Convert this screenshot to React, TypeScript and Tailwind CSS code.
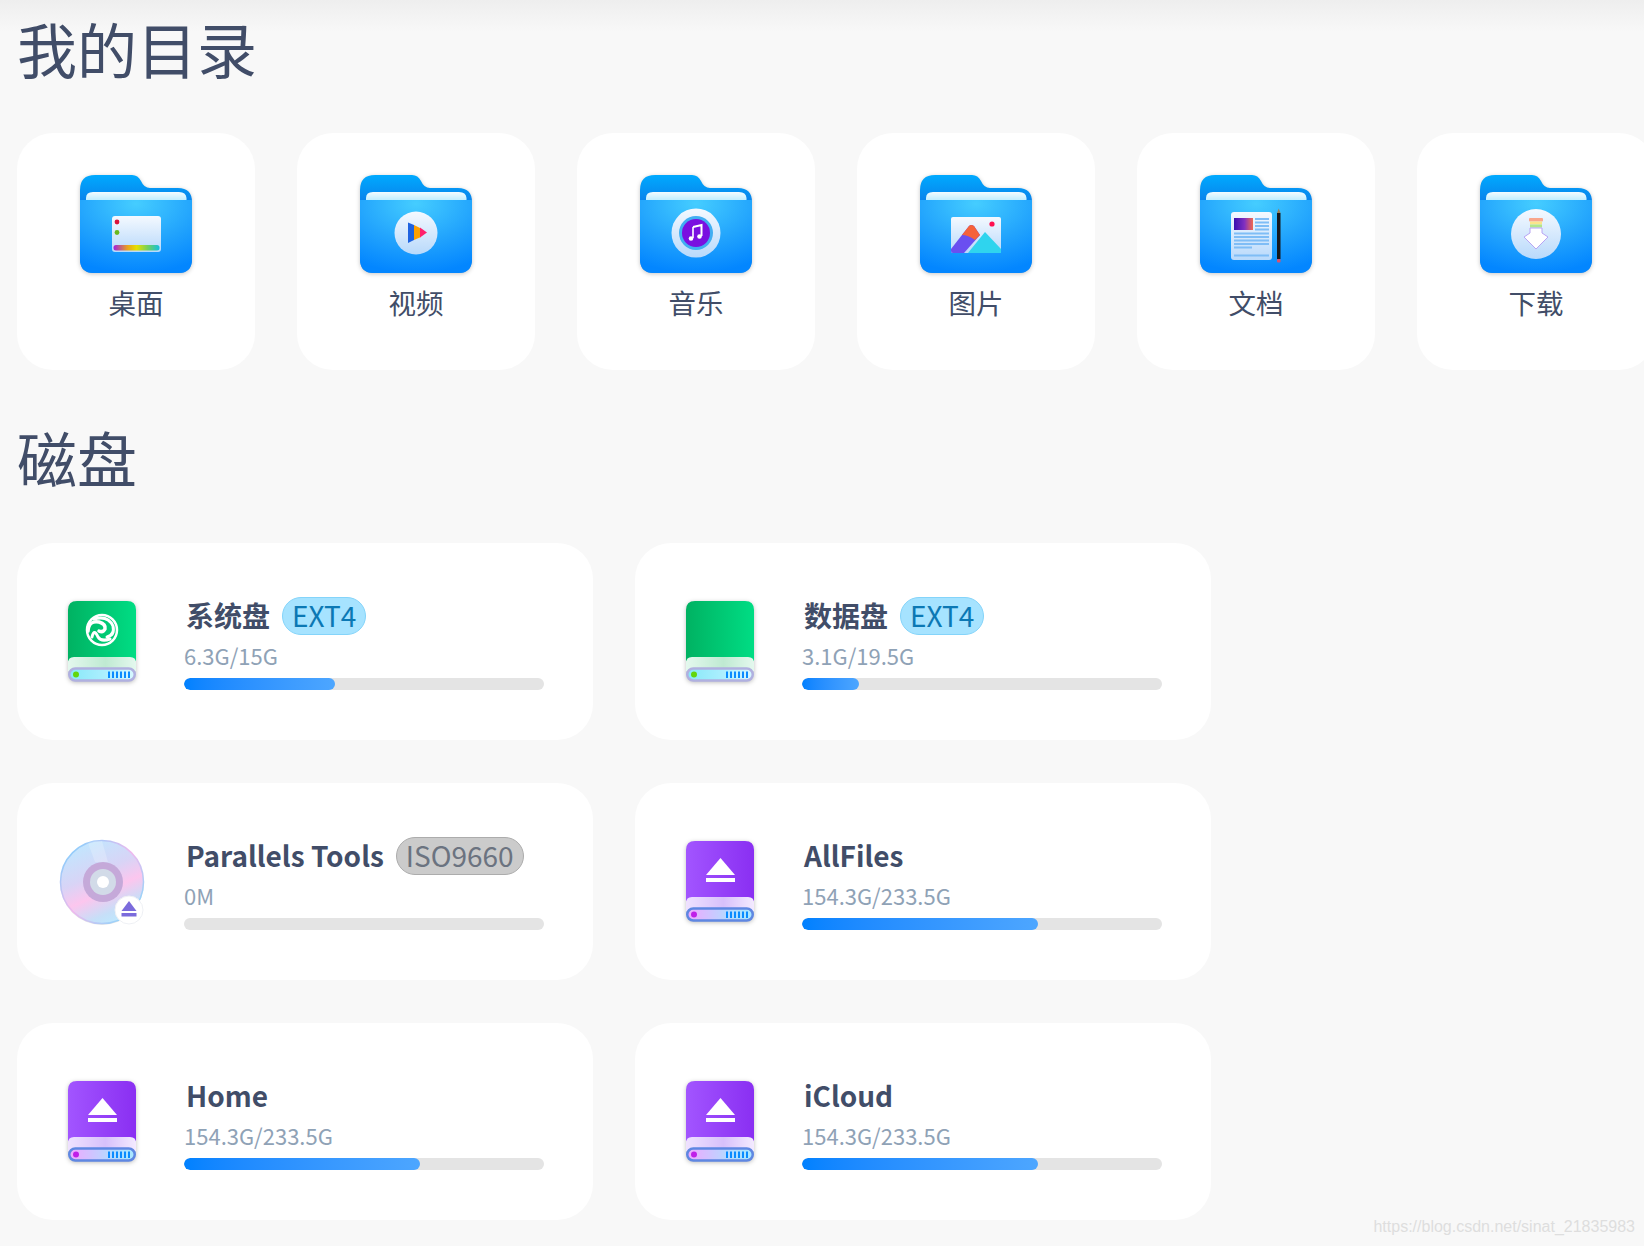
import React from 'react';

const FOLDERS = [
  { id: 'desktop', label: '桌面' },
  { id: 'video', label: '视频' },
  { id: 'music', label: '音乐' },
  { id: 'picture', label: '图片' },
  { id: 'doc', label: '文档' },
  { id: 'download', label: '下载' },
];

const DISKS = [
  { id: 'sys', name: '系统盘', badge: 'EXT4', usage: '6.3G/15G', percent: 42, icon: 'green', logo: true },
  { id: 'data', name: '数据盘', badge: 'EXT4', usage: '3.1G/19.5G', percent: 15.7, icon: 'green' },
  { id: 'tools', name: 'Parallels Tools', badge: 'ISO9660', usage: '0M', percent: 0, icon: 'disc' },
  { id: 'all', name: 'AllFiles', usage: '154.3G/233.5G', percent: 65.6, icon: 'purple' },
  { id: 'home', name: 'Home', usage: '154.3G/233.5G', percent: 65.6, icon: 'purple' },
  { id: 'icloud', name: 'iCloud', usage: '154.3G/233.5G', percent: 65.6, icon: 'purple' },
];

function FolderGlyph({ id }: { id: string }) {
  if (id === 'desktop') {
    return (
      <g>
        <rect x="32" y="41" width="49" height="36" rx="3" fill={`url(#${id}-paper)`} />
        <circle cx="37" cy="47" r="2.4" fill="#d9123c" />
        <circle cx="37" cy="57.5" r="2.4" fill="#6ab81e" />
        <rect x="33.5" y="70" width="46" height="5.5" rx="2.5" fill={`url(#${id}-rainbow)`} />
      </g>
    );
  }
  if (id === 'video') {
    return (
      <g>
        <circle cx="56" cy="58" r="21.5" fill={`url(#${id}-paper)`} />
        <path d="M48 47.5 L54 50 V65 L48 68 Z" fill="#1f63e0" />
        <path d="M54 50 L61 53.5 V62 L54 65 Z" fill="#ffa000" />
        <path d="M60 52.5 L67 57.5 L60 62.5 Z" fill="#ff1f6b" />
      </g>
    );
  }
  if (id === 'music') {
    return (
      <g>
        <circle cx="56" cy="58" r="24.5" fill={`url(#${id}-paper)`} />
        <circle cx="56" cy="58" r="17" fill="#41aef2" />
        <circle cx="56" cy="58" r="14" fill="#7a0fe0" />
        <path d="M53 52 L61.500 50 V61" fill="none" stroke="#fff" strokeWidth="2" />
        <path d="M53 52 V63" fill="none" stroke="#fff" strokeWidth="1.6" />
        <circle cx="51" cy="63.500" r="2.300" fill="#fff" />
        <circle cx="59.500" cy="61.500" r="2.300" fill="#fff" />
      </g>
    );
  }
  if (id === 'picture') {
    return (
      <g>
        <rect x="31" y="42" width="50" height="36" rx="2" fill={`url(#${id}-paper)`} />
        <circle cx="72" cy="49" r="2.6" fill="#ff1050" />
        <path d="M52 73 L65 57 L81 74 V78 H48 Z" fill="#2fd4ee" />
        <path d="M31 74 L49 51 Q51 49 54 51 L60 60 L44 78 H33 Q31 78 31 76 Z" fill="#6a4ff0" />
        <path d="M42 60 L49 51 Q51 49 54 51 L60 60 L55 65 Q48 60 42 60 Z" fill="#f5623a" />
      </g>
    );
  }
  if (id === 'doc') {
    return (
      <g>
        <rect x="31" y="37" width="41" height="48" rx="3" fill={`url(#${id}-paper)`} />
        <rect x="34" y="43" width="19" height="12" fill={`url(#${id}-thumb)`} />
        <path d="M55 44H69M55 47.500H69M55 51H69M55 54.500H69" stroke="#7fbdf6" strokeWidth="2" />
        <path d="M34 58.500H69M34 62H69M34 65.500H69M34 69H69" stroke="#7fbdf6" strokeWidth="2" />
        <path d="M34 72.500H52M34 80.500H69" stroke="#7fbdf6" strokeWidth="2" />
        <rect x="77" y="38" width="3.500" height="46" fill="#16181c" />
        <path d="M77 38 L78.700 33.500 L80.500 38 Z" fill="#a08050" />
        <rect x="77" y="84" width="3.500" height="3.500" rx="1" fill="#e0506a" />
      </g>
    );
  }
  return (
    <g>
      <circle cx="56" cy="59" r="25" fill={`url(#${id}-paper)`} />
      <rect x="49" y="43" width="14" height="3.5" rx="1" fill="#f9a68c" />
      <rect x="50" y="46.5" width="12" height="3" fill="#fbe58a" />
      <rect x="50" y="49.5" width="12" height="3" fill="#b2e68a" />
      <path d="M50 53 H62 V58 L68 62 L56 74 L44 62 L50 58 Z" fill="#fff" stroke="#b8a4f4" strokeWidth="1" />
    </g>
  );
}

function FolderIcon({ id }: { id: string }) {
  return (
    <svg width="112" height="98" viewBox="0 0 112 98" className="blur-[0.4px] drop-shadow-[0_1px_2px_rgba(0,0,0,0.22)]">
      <defs>
        <linearGradient id={`${id}-back`} x1="0" y1="0" x2="0" y2="1">
          <stop offset="0" stopColor="#00aaff" />
          <stop offset="0.3" stopColor="#0a7ee8" />
        </linearGradient>
        <radialGradient id={`${id}-body`} cx="0.5" cy="0.05" r="0.95">
          <stop offset="0" stopColor="#45cdff" />
          <stop offset="0.55" stopColor="#22a4fd" />
          <stop offset="1" stopColor="#0386ff" />
        </radialGradient>
        <linearGradient id={`${id}-sheet`} x1="0" y1="0" x2="0" y2="1">
          <stop offset="0" stopColor="#f4fcff" />
          <stop offset="1" stopColor="#c0eeff" />
        </linearGradient>
        <linearGradient id={`${id}-paper`} x1="0" y1="0" x2="0" y2="1">
          <stop offset="0" stopColor="#f4f9ff" />
          <stop offset="1" stopColor="#b8d9fb" />
        </linearGradient>
        <linearGradient id={`${id}-rainbow`} x1="0" y1="0" x2="1" y2="0">
          <stop offset="0" stopColor="#a01fe0" />
          <stop offset="0.3" stopColor="#e8a020" />
          <stop offset="0.5" stopColor="#e6e000" />
          <stop offset="0.75" stopColor="#70d060" />
          <stop offset="1" stopColor="#10c0e0" />
        </linearGradient>
        <linearGradient id={`${id}-thumb`} x1="0" y1="0" x2="1" y2="0">
          <stop offset="0" stopColor="#3a10b0" />
          <stop offset="0.55" stopColor="#8030c0" />
          <stop offset="1" stopColor="#f06a50" />
        </linearGradient>
      </defs>
      <path
        d="M0 15 Q0 0 15 0 H52 Q58 0 61 6 Q64 13 70 13 H98 Q112 13 112 27 V84 Q112 98 98 98 H14 Q0 98 0 84 Z"
        fill={`url(#${id}-back)`}
      />
      <path d="M6 25 V23 Q6 17 13 17 H99 Q106 17 106.500 23 V25 Z" fill={`url(#${id}-sheet)`} />
      <path d="M0 25 H112 V84 Q112 98 98 98 H14 Q0 98 0 84 Z" fill={`url(#${id}-body)`} />
      <FolderGlyph id={id} />
    </svg>
  );
}

function DriveIcon({ id, purple, logo }: { id: string; purple?: boolean; logo?: boolean }) {
  return (
    <svg width="68" height="82" viewBox="0 0 68 82" className="blur-[0.4px] drop-shadow-[0_1px_2px_rgba(0,0,0,0.25)]">
      <defs>
        <linearGradient id={`${id}-case`} x1="0" y1="0" x2="1" y2="0">
          <stop offset="0" stopColor={purple ? '#a255ff' : '#00b262'} />
          <stop offset="1" stopColor={purple ? '#8a2ff2' : '#00dd84'} />
        </linearGradient>
        <linearGradient id={`${id}-front`} x1="0" y1="0" x2="1" y2="0">
          <stop offset="0" stopColor={purple ? '#efe2ff' : '#e4f8ee'} />
          <stop offset="0.55" stopColor={purple ? '#d8c0fb' : '#bfead2'} />
          <stop offset="1" stopColor={purple ? '#f3eaff' : '#e4f8ee'} />
        </linearGradient>
        <linearGradient id={`${id}-tray`} x1="0" y1="0" x2="1" y2="0">
          <stop offset="0" stopColor={purple ? '#f0a8ff' : '#88e8f8'} />
          <stop offset="0.6" stopColor={purple ? '#b8d8ff' : '#b0f0ff'} />
          <stop offset="1" stopColor={purple ? '#a8e8ff' : '#d8f8ff'} />
        </linearGradient>
      </defs>
      <path d="M0 9 Q0 0 9 0 H59 Q68 0 68 9 V60 H0 Z" fill={`url(#${id}-case)`} />
      <path d="M0 62 Q0 56 6 56 H62 Q68 56 68 62 V70 H0 Z" fill={`url(#${id}-front)`} />
      <rect
        x="1.250"
        y="67.500"
        width="65.500"
        height="12"
        rx="6"
        fill={`url(#${id}-tray)`}
        stroke={purple ? '#5f87e2' : '#b0b0e0'}
        strokeWidth="2.500"
      />
      <circle cx="8" cy="73.500" r="3" fill={purple ? '#c01fe8' : '#62d60a'} />
      <path d="M41 70.500V77M45 70.500V77M49 70.500V77M53 70.500V77M57 70.500V77M61 70.500V77" stroke="#0a8cff" strokeWidth="2" />
      {logo && (
        <g fill="none" stroke="#fff" strokeLinecap="round">
          <circle cx="34" cy="29" r="15" strokeWidth="2.500" />
          <path d="M26 18 Q40 14 45 25 Q47 34 39 36" strokeWidth="3" />
          <path d="M20 30 Q21 19 31 21 Q38 23 37 28 Q35 32 31 30" strokeWidth="3.500" />
          <path d="M24 36 Q26 27 30 36 Q33 41 42 38" strokeWidth="3" />
        </g>
      )}
      {purple && (
        <g fill="#fff">
          <path d="M34.500 17 L49 34 H20 Z" />
          <rect x="20" y="37" width="29" height="4" />
        </g>
      )}
    </svg>
  );
}

function DiscIcon() {
  return (
    <svg width="88" height="88" viewBox="0 0 88 88" className="shrink-0 blur-[0.4px]">
      <defs>
        <linearGradient id="disc-face" x1="0.25" y1="0" x2="0.7" y2="1">
          <stop offset="0" stopColor="#bfe8ff" />
          <stop offset="0.4" stopColor="#d8d4f6" />
          <stop offset="0.62" stopColor="#fcc6ee" />
          <stop offset="0.85" stopColor="#c6dff8" />
          <stop offset="1" stopColor="#bdeaff" />
        </linearGradient>
        <linearGradient id="disc-rim" x1="0" y1="0" x2="1" y2="1">
          <stop offset="0" stopColor="#6fd4ff" />
          <stop offset="0.5" stopColor="#f0b8ee" />
          <stop offset="1" stopColor="#6fe0ff" />
        </linearGradient>
      </defs>
      <circle cx="44" cy="45" r="42" fill="#000" opacity="0.1" />
      <circle cx="44" cy="44" r="41.500" fill="url(#disc-face)" stroke="url(#disc-rim)" strokeWidth="1.500" />
      <path d="M44 3 L50 24 L37 24 L30 5 Q37 2 44 3 Z" fill="#fff" opacity="0.22" />
      <circle cx="45" cy="44" r="20" fill="#c5a9d9" />
      <circle cx="45" cy="44" r="13" fill="#d2dbe8" />
      <circle cx="45" cy="44" r="6" fill="#fff" />
      <circle cx="71" cy="72" r="14" fill="#fff" stroke="#eef0f4" strokeWidth="1" />
      <path d="M71 63 L78.500 73 H63.500 Z" fill="#7b6bdc" />
      <rect x="63.500" y="75" width="15" height="3.500" fill="#7b6bdc" />
    </svg>
  );
}

function Badge({ text }: { text: string }) {
  const isIso = text === 'ISO9660';
  return (
    <span
      className={
        isIso
          ? 'ml-3 flex h-[38px] items-center rounded-[19px] border border-[#acacac] bg-[#cbcbcb] px-[9px] pb-[3px] text-[28px] font-normal text-[#6b7380]'
          : 'ml-3 flex h-[38px] items-center rounded-[19px] border border-[#84d4fa] bg-[#a6e3ff] px-[9px] pb-[3px] text-[28px] font-normal text-[#0b78b4]'
      }
    >
      {text}
    </span>
  );
}

export default function App() {
  return (
    <div className="relative h-[1246px] w-[1644px] overflow-hidden bg-[#f8f8f8] bg-[linear-gradient(#eeeeee_0px,#f8f8f8_32px)] pl-[17px] pt-[18px] font-['Noto_Sans_CJK_SC',sans-serif] text-[#414d68]">
      <h1 className="h-[60px] text-[60px] leading-[60px] font-normal">我的目录</h1>

      <div className="mt-[55px] flex gap-[42px]">
        {FOLDERS.map((folder) => (
          <div
            key={folder.id}
            className="flex h-[237px] w-[238px] shrink-0 flex-col items-center rounded-[36px] bg-white pt-[42px]"
          >
            <FolderIcon id={folder.id} />
            <span className="mt-[11px] text-[27.500px] leading-[36px]">{folder.label}</span>
          </div>
        ))}
      </div>

      <h2 className="mt-[57px] h-[60px] text-[60px] leading-[60px] font-normal">磁盘</h2>

      <div className="mt-[56px] grid w-[1194px] grid-cols-2 gap-x-[42px] gap-y-[43px]">
        {DISKS.map((disk) => (
          <div key={disk.id} className="flex h-[197px] w-[576px] items-center rounded-[36px] bg-white pl-[45px]">
            <div className="flex h-[84px] w-[80px] shrink-0 items-center justify-center">
              {disk.icon === 'disc' ? (
                <DiscIcon />
              ) : (
                <DriveIcon id={disk.id} purple={disk.icon === 'purple'} logo={disk.logo} />
              )}
            </div>
            <div className="ml-[42px] mt-1 w-[360px]">
              <div className="flex h-[38px] items-center pl-0.5 text-[28px] font-bold">
                <span className="pb-0.5">{disk.name}</span>
                {disk.badge && <Badge text={disk.badge} />}
              </div>
              <div className="mt-[3px] h-[34px] text-[22px] leading-[34px] text-[#8fa2b6]">{disk.usage}</div>
              <div className="mt-[6px] h-3 w-full overflow-hidden rounded-md bg-[#e4e4e4]">
                <div
                  className="h-full rounded-md bg-gradient-to-r from-[#0081ff] to-[#4da6ff]"
                  style={{ width: `${disk.percent}%` }}
                />
              </div>
            </div>
          </div>
        ))}
      </div>

      <span className="absolute right-[9px] bottom-[7px] font-['Liberation_Sans',sans-serif] text-[16px] text-[#dedede]">
        https://blog.csdn.net/sinat_21835983
      </span>
    </div>
  );
}
